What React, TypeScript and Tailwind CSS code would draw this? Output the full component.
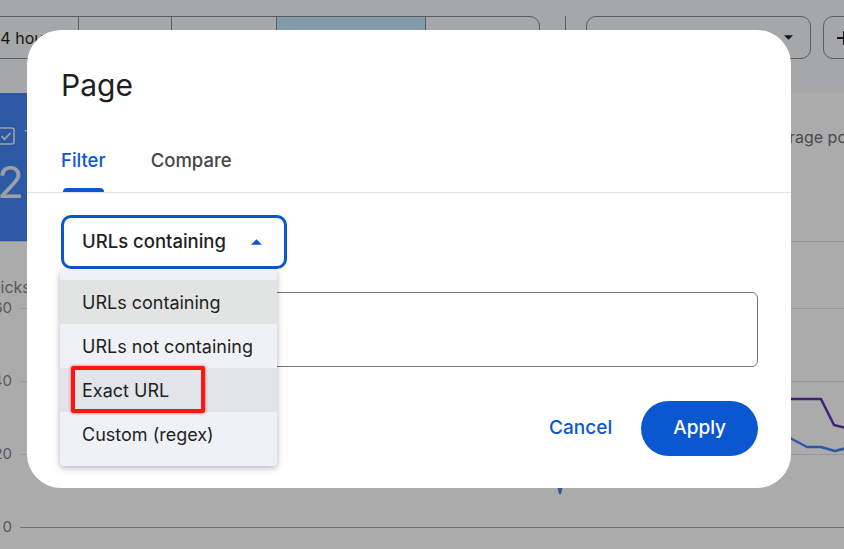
import React from 'react';

const ranges = [
  { label: '24 hours', cls: 'w-[108px]' },
  { label: '7 days', cls: 'w-[93px]' },
  { label: '28 days', cls: 'w-[105px]' },
  { label: '3 months', cls: 'w-[149px] bg-[#c2e7ff]' },
  { label: 'More', cls: 'w-[113px]' },
];

const options = [
  { label: 'URLs containing', cls: 'bg-[#e2e4e3]' },
  { label: 'URLs not containing', cls: '' },
  { label: 'Exact URL', cls: 'bg-[#e1e4e9]', marked: true },
  { label: 'Custom (regex)', cls: '' },
];

const ticks = [
  { label: '60', line: 'bg-[#e3e3e3]' },
  { label: '40', line: 'bg-[#e3e3e3]' },
  { label: '20', line: 'bg-[#e3e3e3]' },
  { label: '0', line: 'bg-[#a9a9a9]' },
];

const Background = () => (
  <div className="flex h-full flex-col">
    {/* toolbar */}
    <div className="flex h-[93px] shrink-0 items-start bg-[#f6f9fd] pt-4">
      <div className="ml-[-30px] flex h-[43px] shrink-0 divide-x divide-[#878b90] overflow-hidden rounded-[10px] border border-[#878b90]">
        {ranges.map((r) => (
          <div
            key={r.label}
            className={`flex shrink-0 items-center justify-center text-[16px] text-[#1f1f1f] ${r.cls}`}
          >
            {r.label}
          </div>
        ))}
      </div>
      <div className="ml-[25px] h-[44px] w-px shrink-0 bg-[#878b90]" />
      <div className="ml-[20px] flex h-[43px] w-[225px] shrink-0 items-center justify-between rounded-[10px] border border-[#878b90] pl-4 pr-[17px] text-[16px] text-[#1f1f1f]">
        <span>Search type: Web</span>
        <svg width="9" height="5" viewBox="0 0 10 5">
          <path d="M0 0 L5 5 L10 0Z" fill="#1f1f1f" />
        </svg>
      </div>
      <div className="ml-[12px] flex h-[43px] w-[120px] shrink-0 items-center gap-2 rounded-[10px] border border-[#878b90] pl-[11px] text-[16px] text-[#1f1f1f]">
        <svg width="18" height="18" viewBox="0 0 18 18" className="shrink-0">
          <path d="M9 2 V16 M2 9 H16" stroke="#1f1f1f" strokeWidth="2" />
        </svg>
        <span>New</span>
      </div>
    </div>

    {/* metric cards */}
    <div className="flex h-[149px] shrink-0 border-b border-[#dadce0]">
      <div className="ml-[-20px] flex w-[200px] shrink-0 flex-col bg-[#4285f4] pl-[17px] pt-[34px] text-white">
        <div className="flex h-[18px] items-center gap-[9px]">
          <svg width="18" height="18" viewBox="0 0 18 18" fill="none">
            <rect x="1" y="1" width="16" height="16" rx="2" stroke="#e8eefc" strokeWidth="1.6" />
            <path d="M4.5 9.2 L7.6 12.2 L13.5 6" stroke="#e8eefc" strokeWidth="1.8" />
          </svg>
          <span className="text-[15px]">Total clicks</span>
        </div>
        <div className="mt-[15px] text-[44px] leading-[44px] text-[#e8eefc]">2.3K</div>
      </div>
      <div className="ml-auto w-[83px] shrink-0 pt-[32px] text-[16px] whitespace-nowrap text-[#6b6f73]">
        Average position
      </div>
    </div>

    {/* chart */}
    <div className="relative flex-1">
      <div className="ml-[-15px] mt-[35px] text-[16px] leading-[20px] text-[#80868b]">Clicks</div>
      <div className="mt-px flex flex-col gap-[53px]">
        {ticks.map((t) => (
          <div key={t.label} className="flex h-[20px] items-center">
            <span className="ml-[-12px] w-[24px] text-right text-[15px] text-[#80868b]">{t.label}</span>
            <span className={`ml-[8px] h-px flex-1 ${t.line}`} />
          </div>
        ))}
      </div>
      <svg className="absolute inset-0" width="844" height="307" viewBox="0 0 844 307" fill="none">
        <polyline
          points="60,200 120,190 220,170 320,185 420,160 520,175 620,150 700,165 760,158 790,157 821,157 834,183 850,187"
          stroke="#5e35b1"
          strokeWidth="2.5"
          strokeLinejoin="round"
        />
        <polyline
          points="60,230 120,222 220,215 320,225 420,210 520,215 548,205 557,236 560,251 563,236 572,205 640,210 720,200 790,196 807,205 821,205 835,209 850,205"
          stroke="#4285f4"
          strokeWidth="2.5"
          strokeLinejoin="round"
        />
      </svg>
    </div>
  </div>
);

export default function App() {
  return (
    <div className="relative h-[549px] w-[844px] overflow-hidden bg-white font-['Inter',sans-serif]">
      <Background />

      {/* scrim */}
      <div className="absolute inset-0 bg-black/[0.33]" />

      {/* dialog */}
      <div className="absolute left-[27px] top-[30px] w-[764px] rounded-[34px] bg-white pb-[32px] pl-[34px] pr-[33px] pt-[37px]">
        <h2 className="text-[30px] leading-[36px] text-[#1f1f1f]">Page</h2>

        <div className="-ml-[34px] -mr-[33px] mt-[45px] flex gap-[45px] border-b border-[#e3e3e3] pl-[34px]">
          <div className="flex flex-col">
            <span className="pb-[16px] text-[18.5px] font-medium leading-[24px] text-[#0b57d0]">Filter</span>
            <span className="mx-[2px] h-[4px] rounded-t-[4px] bg-[#0b57d0]" />
          </div>
          <div className="flex flex-col">
            <span className="pb-[20px] text-[18.5px] font-medium leading-[24px] text-[#444746]">Compare</span>
          </div>
        </div>

        <div className="relative mt-[22px] w-[226px]">
          <div className="flex h-[54px] items-center justify-between rounded-[10px] border-[3px] border-[#0b57d0] pl-[18px] pr-[22px]">
            <span className="text-[18.5px] font-medium text-[#1f1f1f]">URLs containing</span>
            <svg width="11" height="6" viewBox="0 0 10 5">
              <path d="M0 5 L5 0 L10 5Z" fill="#0b57d0" />
            </svg>
          </div>

          <div className="absolute left-[-1px] top-[55px] z-10 w-[217px] rounded-b-[4px] bg-[#eef1f6] py-[10px] shadow-[0_2px_6px_rgba(0,0,0,0.3)]">
            {options.map((o) => (
              <div
                key={o.label}
                className={`relative flex h-[44px] items-center pl-[22px] text-[18px] text-[#1f1f1f] ${o.cls}`}
              >
                {o.label}
                {o.marked && (
                  <span className="absolute left-[11px] top-[-2px] h-[47px] w-[134px] rounded-[2px] border-[4px] border-[#ff1414] shadow-[0_0_3px_rgba(255,0,0,0.7)]" />
                )}
              </div>
            ))}
          </div>
        </div>

        <div className="mt-[23px] h-[75px] rounded-[6px] border border-[#747775]" />

        <div className="mt-[34px] flex items-center justify-end gap-[29px]">
          <button className="text-[19px] font-medium text-[#0b57d0]">Cancel</button>
          <button className="h-[55px] rounded-full bg-[#0b57d0] px-[32px] text-[19px] font-medium text-white">
            Apply
          </button>
        </div>
      </div>
    </div>
  );
}
